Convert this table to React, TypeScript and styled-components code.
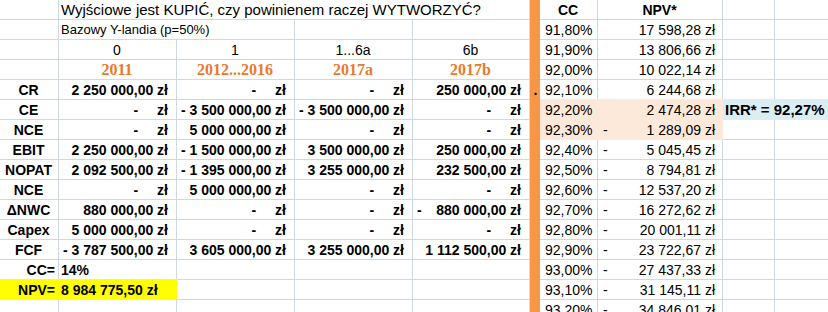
import React from "react";
import styled, { createGlobalStyle, css } from "styled-components";

const GRID = "#D0D7E5";
const ORANGE_BAR = "#F79646";
const ORANGE_TEXT = "#E97A2B";
const PEACH = "#FDE9D9";
const BLUE = "#DBEEF3";
const YELLOW = "#FFFF00";

const GlobalStyle = createGlobalStyle`
  html, body { margin: 0; padding: 0; background: #ffffff; }
  body {
    font-family: "Liberation Sans", Arial, sans-serif;
    color: #000000;
  }
`;

const Sheet = styled.div`
  display: grid;
  grid-template-columns: 59px 118px 118px 118px 117px 10px 58px 125px 52px 80px;
  grid-auto-rows: 20px;
  width: 828px;
  height: 312px;
  overflow: hidden;
  background: #ffffff;
`;

type Align = "left" | "center" | "right" | "split";

interface CellProps {
  $span?: number;
  $align?: Align;
  $bold?: boolean;
  $fill?: string;
  $size?: number;
  $padL?: number;
  $padR?: number;
}

const Cell = styled.div<CellProps>`
  box-sizing: border-box;
  grid-column: span ${(p) => p.$span ?? 1};
  border-right: 1px solid ${GRID};
  border-bottom: 1px solid ${GRID};
  display: flex;
  align-items: center;
  justify-content: ${(p) =>
    p.$align === "center"
      ? "center"
      : p.$align === "right"
      ? "flex-end"
      : p.$align === "split"
      ? "space-between"
      : "flex-start"};
  padding: 0 ${(p) => p.$padR ?? 3}px 0 ${(p) => p.$padL ?? 2}px;
  font-size: ${(p) => p.$size ?? 14}px;
  font-weight: ${(p) => (p.$bold ? 700 : 400)};
  white-space: pre;
  overflow: visible;
  min-width: 0;
  ${(p) =>
    p.$fill &&
    css`
      background: ${p.$fill};
      border-color: transparent;
      margin-top: -1px;
      padding-top: 1px;
    `}
`;

const Title = styled(Cell)`
  font-size: 15px;
`;

const YearCell = styled(Cell)`
  font-family: "Liberation Serif", "Times New Roman", serif;
  font-size: 16px;
  font-weight: 700;
  color: ${ORANGE_TEXT};
`;

const OrangeBar = styled.div`
  grid-column: 6;
  grid-row: 1 / span 16;
  background: ${ORANGE_BAR};
`;

const BarDot = styled.div`
  grid-column: 6;
  grid-row: 5;
  display: flex;
  align-items: center;
  justify-content: center;
  font-size: 14px;
  font-weight: 700;
  padding-left: 1px;
`;

const ZeroDash = styled.span`
  margin-right: 19px;
`;

const Irr = styled(Cell)`
  font-size: 15px;
  font-weight: 700;
  padding-left: 2px;
`;

function fmt(n: number): string {
  const [i, d] = Math.abs(n).toFixed(2).split(".");
  const grouped = i.replace(/\B(?=(\d{3})+(?!\d))/g, "\u00a0");
  return `${grouped},${d}`;
}

function Money({ v, bold = true, fill, padL = 4, padR = 8 }: { v: number; bold?: boolean; fill?: string; padL?: number; padR?: number }) {
  return (
    <Cell $align="split" $bold={bold} $fill={fill} $padL={padL} $padR={padR}>
      <span>{v < 0 ? "-" : ""}</span>
      {v === 0 ? (
        <span>
          <ZeroDash>-</ZeroDash>zł
        </span>
      ) : (
        <span>{fmt(v)} zł</span>
      )}
    </Cell>
  );
}

const leftRows: { label: string; vals: number[] }[] = [
  { label: "CR", vals: [2250000, 0, 0, 250000] },
  { label: "CE", vals: [0, -3500000, -3500000, 0] },
  { label: "NCE", vals: [0, 5000000, 0, 0] },
  { label: "EBIT", vals: [2250000, -1500000, 3500000, 250000] },
  { label: "NOPAT", vals: [2092500, -1395000, 3255000, 232500] },
  { label: "NCE", vals: [0, 5000000, 0, 0] },
  { label: "ΔNWC", vals: [880000, 0, 0, -880000] },
  { label: "Capex", vals: [5000000, 0, 0, 0] },
  { label: "FCF", vals: [-3787500, 3605000, 3255000, 1112500] },
];

const rightRows: { cc: string; npv: number }[] = [
  { cc: "91,80%", npv: 17598.28 },
  { cc: "91,90%", npv: 13806.66 },
  { cc: "92,00%", npv: 10022.14 },
  { cc: "92,10%", npv: 6244.68 },
  { cc: "92,20%", npv: 2474.28 },
  { cc: "92,30%", npv: -1289.09 },
  { cc: "92,40%", npv: -5045.45 },
  { cc: "92,50%", npv: -8794.81 },
  { cc: "92,60%", npv: -12537.2 },
  { cc: "92,70%", npv: -16272.62 },
  { cc: "92,80%", npv: -20001.11 },
  { cc: "92,90%", npv: -23722.67 },
  { cc: "93,00%", npv: -27437.33 },
  { cc: "93,10%", npv: -31145.11 },
  { cc: "93,20%", npv: -34846.01 },
];

function Right({ i }: { i: number }) {
  const r = rightRows[i - 1];
  const fill = i === 5 || i === 6 ? PEACH : undefined;
  return (
    <>
      <Cell $fill={fill} $padL={5}>
        {r.cc}
      </Cell>
      <Money v={r.npv} bold={false} fill={fill} padL={5} padR={7} />
      {i === 5 ? (
        <Irr $span={2} $fill={BLUE}>
          IRR* = 92,27%
        </Irr>
      ) : (
        <>
          <Cell />
          <Cell />
        </>
      )}
    </>
  );
}

export default function App() {
  return (
    <>
      <GlobalStyle />
      <Sheet>
        <OrangeBar />
        <BarDot>.</BarDot>

        {/* row 0 */}
        <Cell />
        <Title $span={4}>Wyjściowe jest KUPIĆ, czy powinienem raczej WYTWORZYĆ?</Title>
        <Cell $align="center" $bold>
          CC
        </Cell>
        <Cell $align="center" $bold>
          NPV*
        </Cell>
        <Cell />
        <Cell />

        {/* row 1 */}
        <Cell />
        <Cell $span={2} $size={13}>
          Bazowy Y-landia (p=50%)
        </Cell>
        <Cell />
        <Cell />
        <Right i={1} />

        {/* row 2 */}
        <Cell />
        {["0", "1", "1...6a", "6b"].map((t) => (
          <Cell key={t} $align="center">
            {t}
          </Cell>
        ))}
        <Right i={2} />

        {/* row 3 */}
        <Cell />
        {["2011", "2012...2016", "2017a", "2017b"].map((t) => (
          <YearCell key={t} $align="center">
            {t}
          </YearCell>
        ))}
        <Right i={3} />

        {leftRows.map((row, idx) => (
          <React.Fragment key={idx}>
            <Cell $align="center" $bold>
              {row.label}
            </Cell>
            {row.vals.map((v, j) => (
              <Money key={j} v={v} />
            ))}
            <Right i={idx + 4} />
          </React.Fragment>
        ))}

        {/* row 13 */}
        <Cell $align="right" $bold>
          CC=
        </Cell>
        <Cell $bold $padL={2}>
          14%
        </Cell>
        <Cell />
        <Cell />
        <Cell />
        <Right i={13} />

        {/* row 14 */}
        <Cell $align="right" $bold $fill={YELLOW}>
          NPV=
        </Cell>
        <Cell $bold $fill={YELLOW} $padL={2}>
          8 984 775,50 zł
        </Cell>
        <Cell />
        <Cell />
        <Cell />
        <Right i={14} />

        {/* row 15 */}
        <Cell />
        <Cell />
        <Cell />
        <Cell />
        <Cell />
        <Right i={15} />
      </Sheet>
    </>
  );
}
